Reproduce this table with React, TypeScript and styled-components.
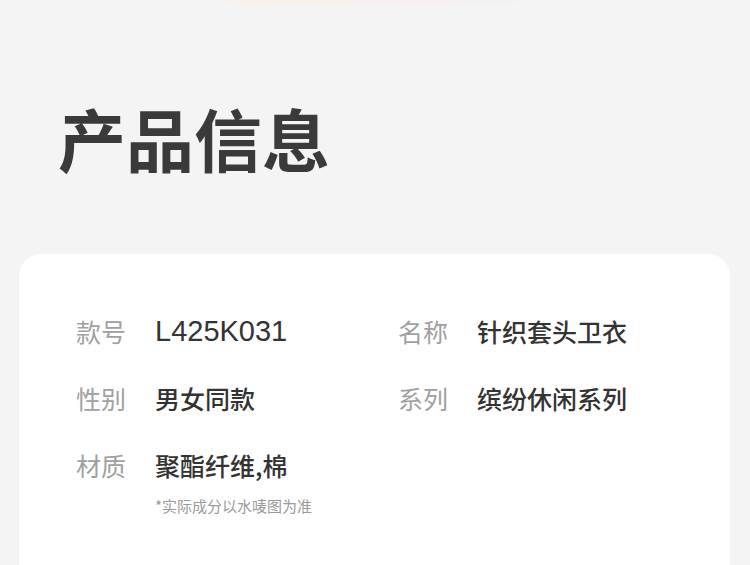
import React from "react";
import styled, { createGlobalStyle } from "styled-components";

const Global = createGlobalStyle`
  html, body { margin: 0; padding: 0; background: #f4f4f4; }
  body { font-family: "Noto Sans CJK SC", "Noto Sans", sans-serif; overflow: hidden; }
`;

const Page = styled.div`
  width: 750px;
  height: 565px;
  background: #f4f4f4;
  display: flex;
  flex-direction: column;
  overflow: hidden;
`;

const TopGlow = styled.div`
  height: 3px;
  margin: 0 180px;
  background: linear-gradient(90deg, rgba(255,240,230,0), #fdeee6 30%, #f7eef2 60%, rgba(253,238,230,0));
`;

const Title = styled.h1`
  margin: 0;
  padding: 101px 0 0 58px;
  font-size: 68px;
  line-height: 68px;
  font-weight: 700;
  color: #3a3a3a;
`;

const Card = styled.section`
  margin: 82px 20px 0 19px;
  flex: 1;
  background: #ffffff;
  border-radius: 22px 22px 0 0;
  padding: 60px 0 0 57px;
  display: flex;
  flex-direction: column;
  gap: 33px;
`;

const Row = styled.div`
  display: grid;
  grid-template-columns: 322px 1fr;
`;

const Field = styled.div`
  display: grid;
  grid-template-columns: 50px auto;
  column-gap: 29px;
  align-items: center;
`;

const Label = styled.span`
  font-size: 25px;
  line-height: 34px;
  color: #a0a0a0;
  font-weight: 400;
`;

const Value = styled.span<{ $latin?: boolean }>`
  font-family: ${(p) => (p.$latin ? '"Liberation Sans", "Noto Sans CJK SC", sans-serif' : '"Noto Sans CJK SC", sans-serif')};
  font-size: ${(p) => (p.$latin ? "29px" : "25px")};
  line-height: 34px;
  color: #333333;
  font-weight: ${(p) => (p.$latin ? 400 : 500)};
  white-space: nowrap;
`;

const Note = styled.span`
  grid-column: 2;
  margin-top: 14px;
  font-size: 15px;
  line-height: 20px;
  color: #9a9a9a;
`;

export default function App() {
  return (
    <Page>
      <Global />
      <TopGlow />
      <Title>产品信息</Title>
      <Card>
        <Row>
          <Field>
            <Label>款号</Label>
            <Value $latin>L425K031</Value>
          </Field>
          <Field>
            <Label>名称</Label>
            <Value>针织套头卫衣</Value>
          </Field>
        </Row>
        <Row>
          <Field>
            <Label>性别</Label>
            <Value>男女同款</Value>
          </Field>
          <Field>
            <Label>系列</Label>
            <Value>缤纷休闲系列</Value>
          </Field>
        </Row>
        <Row>
          <Field>
            <Label>材质</Label>
            <Value>聚酯纤维,棉</Value>
            <Note>*实际成分以水唛图为准</Note>
          </Field>
        </Row>
      </Card>
    </Page>
  );
}
